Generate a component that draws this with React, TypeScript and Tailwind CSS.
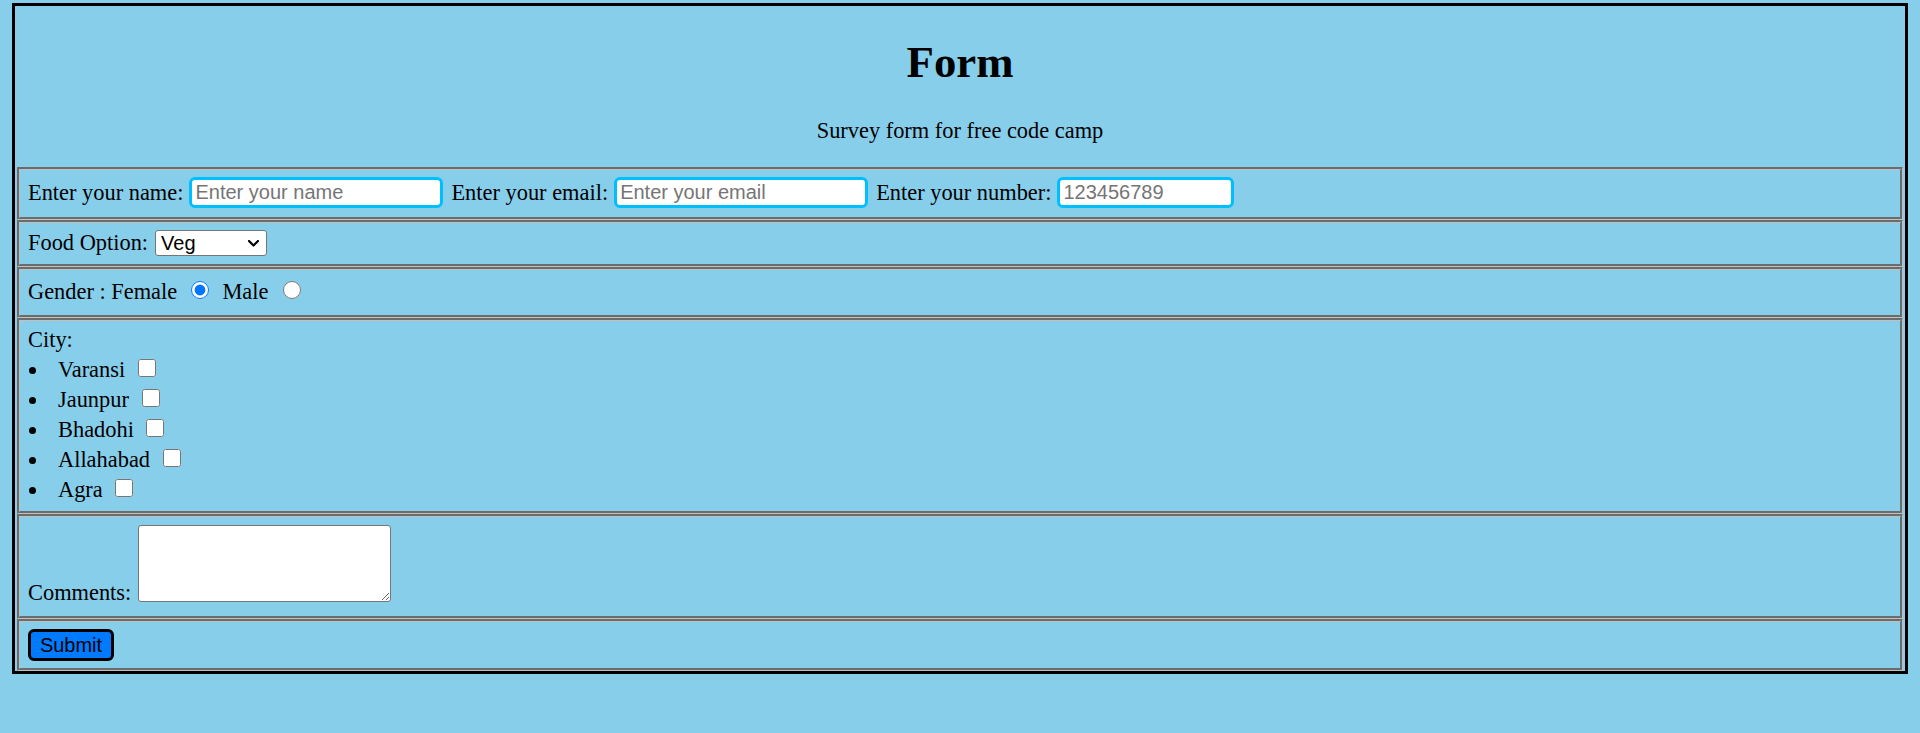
import React from "react";

const row =
  "mx-[2px] border-[3px] [border-style:groove] border-[#c0c0c0] pl-[8px]";
const textInput =
  "h-[31px] rounded-[6px] border-[3px] border-[#00bfff] bg-white pl-[3px] align-middle font-['Liberation_Sans',Arial,sans-serif] text-[20px] text-black placeholder:text-[#757575] outline-none";

const cities = ["Varansi", "Jaunpur", "Bhadohi", "Allahabad", "Agra"];

function App() {
  return (
    <div className="min-h-[733px] bg-[#87ceeb] px-[12px] pt-[3px] font-['Liberation_Serif','Times_New_Roman',serif] text-[22.4px] leading-[26px] text-black">
      <div className="border-[3px] border-black">
        <h1 className="pt-[30px] text-center text-[44.8px] font-bold leading-[52px]">
          Form
        </h1>
        <p className="mt-[30px] text-center">Survey form for free code camp</p>

        <form onSubmit={(e) => e.preventDefault()} className="mt-[23px]">
          {/* name / email / number */}
          <div className={`${row} flex items-center pt-[7px] pb-[9px]`}>
            <span>Enter your name:</span>
            <input
              type="text"
              placeholder="Enter your name"
              className={`${textInput} ml-[6px] w-[254px]`}
            />
            <span className="ml-[8px]">Enter your email:</span>
            <input
              type="email"
              placeholder="Enter your email"
              className={`${textInput} ml-[6px] w-[254px]`}
            />
            <span className="ml-[8px]">Enter your number:</span>
            <input
              type="tel"
              placeholder="123456789"
              className={`${textInput} ml-[6px] w-[177px]`}
            />
          </div>

          {/* food */}
          <div className={`${row} flex items-center pt-[7px] pb-[8px]`}>
            <span>Food Option:</span>
            <span className="relative ml-[7px] inline-block">
              <select className="block h-[26px] w-[112px] appearance-none rounded-[3px] border border-[#767676] bg-white pl-[5px] font-['Liberation_Sans',Arial,sans-serif] text-[20px] leading-[24px]">
                <option>Veg</option>
                <option>Non-Veg</option>
              </select>
              <svg
                className="pointer-events-none absolute top-[10px] right-[8px]"
                width="11"
                height="7"
                viewBox="0 0 11 7"
                fill="none"
              >
                <path
                  d="M1 1l4.5 4.5L10 1"
                  stroke="black"
                  strokeWidth="2.2"
                  strokeLinecap="round"
                  strokeLinejoin="round"
                />
              </svg>
            </span>
          </div>

          {/* gender */}
          <div className={`${row} pt-[9px] pb-[10px]`}>
            Gender : Female{" "}
            <input
              type="radio"
              name="gender"
              defaultChecked
              className="ml-[8px] mr-[8px] h-[18px] w-[18px] align-baseline"
            />{" "}
            Male{" "}
            <input
              type="radio"
              name="gender"
              className="ml-[9px] h-[18px] w-[18px] align-baseline"
            />
          </div>

          {/* city */}
          <div className={`${row} pt-[6px] pb-[8px]`}>
            <div>City:</div>
            <ul>
              {cities.map((c) => (
                <li key={c}>
                  <span className="ml-[1px] mr-[22px] inline-block h-[7px] w-[7px] rounded-full bg-black align-[3px]" />
                  {c}{" "}
                  <input
                    type="checkbox"
                    className="mt-[6px] mb-[1px] ml-[7px] h-[18px] w-[18px] align-baseline"
                  />
                </li>
              ))}
            </ul>
          </div>

          {/* comments */}
          <div className={`${row} pt-[8px] pb-[10px]`}>
            Comments:{" "}
            <textarea className="ml-[1px] h-[77px] w-[253px] resize rounded-[3px] border border-[#767676] bg-white align-[-2px]" />
          </div>

          {/* submit */}
          <div className={`${row} pt-[7px] pb-[7px]`}>
            <button
              type="submit"
              className="h-[32px] w-[86px] rounded-[6px] border-[3px] border-black bg-[#007bff] font-['Liberation_Sans',Arial,sans-serif] text-[20px] leading-none text-black"
            >
              Submit
            </button>
          </div>
        </form>
      </div>
    </div>
  );
}

export default App;
